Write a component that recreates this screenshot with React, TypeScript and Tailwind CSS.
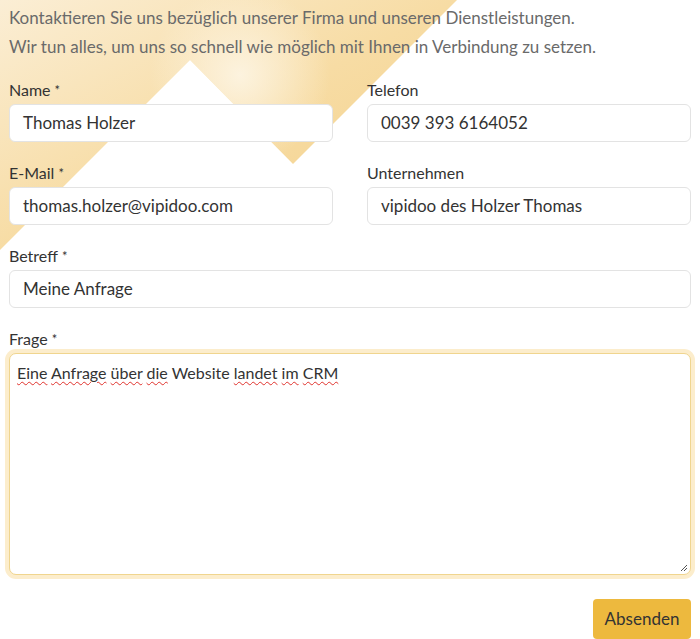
import React from "react"

// ─── Form fields ─────────────────────────────────────────
const pairs = [
  [
    { label: "Name", required: true, value: "Thomas Holzer" },
    { label: "Telefon", required: false, value: "0039 393 6164052" },
  ],
  [
    { label: "E-Mail", required: true, value: "thomas.holzer@vipidoo.com" },
    { label: "Unternehmen", required: false, value: "vipidoo des Holzer Thomas" },
  ],
]

function Label({ text, required }: { text: string; required?: boolean }) {
  return (
    <label className="mb-[2px] block text-[16px] leading-[24px] text-[#333]">
      {text}
      {required && <span className="ml-[4px] text-[13px] align-top">*</span>}
    </label>
  )
}

function Field({ label, required, value }: { label: string; required?: boolean; value: string }) {
  return (
    <div>
      <Label text={label} required={required} />
      <div className="flex h-[38px] items-center rounded-[6px] border border-[#e3e3e3] bg-white px-[13px] text-[17px] text-[#333]">
        {value}
      </div>
    </div>
  )
}

function Squiggle({ children }: { children: React.ReactNode }) {
  return (
    <span className="underline decoration-wavy decoration-[#e0322c] decoration-1 underline-offset-[2px]">
      {children}
    </span>
  )
}

function Backdrop() {
  return (
    <svg className="absolute inset-0 h-full w-full" viewBox="0 0 700 639" preserveAspectRatio="none" aria-hidden="true">
      <defs>
        <linearGradient id="gold" x1="0" y1="0" x2="1" y2="1" gradientUnits="objectBoundingBox">
          <stop offset="0" stopColor="#fbeed5" />
          <stop offset="0.5" stopColor="#f7dca4" />
          <stop offset="1" stopColor="#f3cf86" />
        </linearGradient>
        <radialGradient id="glow" cx="240" cy="75" r="90" gradientUnits="userSpaceOnUse">
          <stop offset="0" stopColor="#fdf5e4" stopOpacity="0.9" />
          <stop offset="1" stopColor="#fdf5e4" stopOpacity="0" />
        </radialGradient>
      </defs>
      <polygon points="0,0 457,0 293,164 190,60 0,250" fill="url(#gold)" />
      <polygon points="0,0 457,0 293,164 190,60 0,250" fill="url(#glow)" />
    </svg>
  )
}

export default function App() {
  return (
    <div className="relative min-h-screen overflow-hidden bg-white" style={{ fontFamily: "Lato, 'Noto Sans', sans-serif" }}>
      <Backdrop />
      <div className="relative px-[9px] pt-[3px]">
        <p className="text-[17px] leading-[29px] text-[#6a6a6a]">
          Kontaktieren Sie uns bezüglich unserer Firma und unseren Dienstleistungen.
          <br />
          Wir tun alles, um uns so schnell wie möglich mit Ihnen in Verbindung zu setzen.
        </p>

        <div className="mt-[17px] flex flex-col gap-[19px]">
          {pairs.map((row, i) => (
            <div key={i} className="grid grid-cols-2 gap-x-[34px]">
              {row.map((f) => (
                <Field key={f.label} label={f.label} required={f.required} value={f.value} />
              ))}
            </div>
          ))}

          <Field label="Betreff" required value="Meine Anfrage" />

          <div>
            <Label text="Frage" required />
            <div className="relative h-[222px] rounded-[7px] border border-[#f0d58e] bg-white px-[7px] py-[6px] text-[16px] leading-[26px] text-[#333] shadow-[0_0_0_4px_#fcedcc]">
              <Squiggle>Eine</Squiggle> <Squiggle>Anfrage</Squiggle> <Squiggle>über</Squiggle>{" "}
              <Squiggle>die</Squiggle> Website <Squiggle>landet</Squiggle> <Squiggle>im</Squiggle>{" "}
              <Squiggle>CRM</Squiggle>
              <svg className="absolute bottom-[2px] right-[2px] h-[8px] w-[8px]" viewBox="0 0 8 8" aria-hidden="true">
                <path d="M7 1 L1 7 M7 4 L4 7" stroke="#555" strokeWidth="1" />
              </svg>
            </div>
          </div>
        </div>

        <div className="mt-[24px] flex justify-end">
          <button className="h-[40px] w-[98px] rounded-[4px] bg-[#edb93e] text-[17px] text-[#333]">
            Absenden
          </button>
        </div>
      </div>
    </div>
  )
}
